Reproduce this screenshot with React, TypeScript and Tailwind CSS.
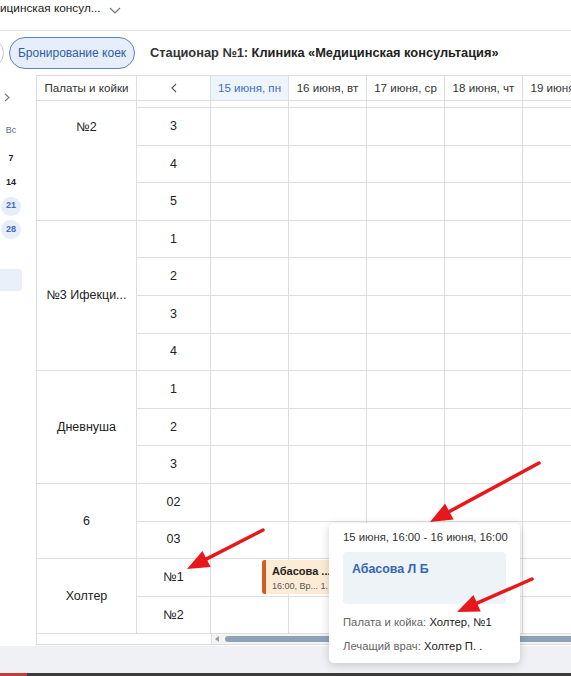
import React from "react";

type Group = { label: string; beds: string[]; partial?: boolean; top?: boolean };

const groups: Group[] = [
  { label: "№2", beds: ["3", "4", "5"], partial: true, top: true },
  { label: "№3 Ифекци...", beds: ["1", "2", "3", "4"] },
  { label: "Дневнуша", beds: ["1", "2", "3"] },
  { label: "6", beds: ["02", "03"] },
  { label: "Холтер", beds: ["№1", "№2"] },
];

const days = ["15 июня, пн", "16 июня, вт", "17 июня, ср", "18 июня, чт", "19 июня, пт", "20 июня, сб"];

function DayCells({ h, event }: { h: string; event?: boolean }) {
  return (
    <>
      {days.map((d, i) => (
        <div
          key={d}
          className={`${h} w-[78px] shrink-0 border-r border-b border-[#dedede] ${i === 0 ? "relative" : ""}`}
        >
          {event && i === 0 && (
            <div className="absolute left-[51px] top-[1px] z-10 h-[34px] w-[80px] rounded-[3px] border-l-[4px] border-[#d35b1c] bg-[#fdecd5] pl-[6px] pt-[4px]">
              <div className="text-[11px] font-bold leading-[14px] text-[#222]">Абасова ...</div>
              <div className="mt-[3px] text-[9px] leading-[11px] text-[#555]">16:00, Вр... 1.</div>
            </div>
          )}
        </div>
      ))}
    </>
  );
}

function Arrow({ x1, y1, x2, y2 }: { x1: number; y1: number; x2: number; y2: number }) {
  const dx = x2 - x1;
  const dy = y2 - y1;
  const len = Math.hypot(dx, dy);
  const ux = dx / len;
  const uy = dy / len;
  const bx = x2 - 22 * ux;
  const by = y2 - 22 * uy;
  const nx = uy;
  const ny = -ux;
  const pts = `${x2},${y2} ${bx + 9 * nx},${by + 9 * ny} ${bx - 9 * nx},${by - 9 * ny}`;
  return (
    <g>
      <line x1={x1} y1={y1} x2={bx + 2 * ux} y2={by + 2 * uy} stroke="#e8171b" strokeWidth={3.5} strokeLinecap="round" />
      <polygon points={pts} fill="#e8171b" />
    </g>
  );
}

export default function App() {
  return (
    <div
      className="relative h-[676px] w-[571px] overflow-hidden bg-white text-[#222]"
      style={{ fontFamily: '"Liberation Sans", Arial, sans-serif' }}
    >
      {/* clinic selector */}
      <div className="flex h-[31px] items-start border-b border-[#e3e3e3]">
        <span className="pt-[1px] text-[11.8px] leading-[14px] text-[#222]">ицинская консул...</span>
        <svg width="12" height="7" viewBox="0 0 12 7" className="ml-[8px] mt-[7px]">
          <polyline points="1,1 6,6 11,1" fill="none" stroke="#777" strokeWidth="1.2" />
        </svg>
      </div>

      {/* tabs + title */}
      <div className="flex h-[44px] items-center">
        <div className="-ml-[28px] h-[32px] w-[32px] shrink-0 rounded-full border border-[#c9c9c9]" />
        <div className="ml-[5px] flex h-[32px] w-[126px] shrink-0 items-center justify-center rounded-full border border-[#5d80be] bg-[#e6eefa] text-[12px] text-[#2f5ca8]">
          Бронирование коек
        </div>
        <div className="ml-[15px] whitespace-nowrap text-[12.8px] text-[#333]">
          <span className="font-semibold">Стационар №1: </span>
          <span className="font-bold text-[#222]">Клиника «Медицинская консультация»</span>
        </div>
      </div>

      <div className="flex h-[571px]">
        {/* mini calendar, clipped */}
        <div className="flex w-[36px] shrink-0 flex-col">
          <svg width="6" height="9" viewBox="0 0 6 9" className="ml-[4px] mt-[18px]">
            <polyline points="1,1 5,4.5 1,8" fill="none" stroke="#777" strokeWidth="1.1" />
          </svg>
          <div className="mt-[21px] flex h-[16px] w-[22px] items-center justify-center text-[9px] text-[#5d6f8b]">Вс</div>
          <div className="mt-[8px] flex w-[22px] flex-col items-center">
            <div className="flex h-[23.7px] items-center text-[9px] font-bold">7</div>
            <div className="flex h-[23.7px] items-center text-[9px] font-bold">14</div>
            <div className="flex h-[23.7px] items-center">
              <div className="flex h-[19px] w-[20px] items-center justify-center rounded-full bg-[#e6eefa] text-[9px] font-bold text-[#3b6bc1]">21</div>
            </div>
            <div className="flex h-[23.7px] items-center">
              <div className="flex h-[19px] w-[20px] items-center justify-center rounded-full bg-[#e6eefa] text-[9px] font-bold text-[#3b6bc1]">28</div>
            </div>
          </div>
          <div className="mt-[27px] h-[22px] w-[22px] rounded-r-[4px] bg-[#eaf0fa]" />
        </div>

        {/* bed board */}
        <div className="flex shrink-0 flex-col border-t border-l border-[#dedede]">
          <div className="flex h-[25px] border-b border-[#dedede] text-[11.6px] text-[#333]">
            <div className="flex w-[100px] shrink-0 items-center justify-center border-r border-[#dedede]">Палаты и койки</div>
            <div className="flex w-[74px] shrink-0 items-center justify-center border-r border-[#dedede]">
              <svg width="6" height="10" viewBox="0 0 6 10">
                <polyline points="5,1 1,5 5,9" fill="none" stroke="#555" strokeWidth="1.1" />
              </svg>
            </div>
            {days.map((d, i) => (
              <div
                key={d}
                className={`flex w-[78px] shrink-0 items-center justify-center whitespace-nowrap border-r border-[#dedede] ${
                  i === 0 ? "bg-[#eef4fc] text-[#3a6cc2]" : ""
                }`}
              >
                {d}
              </div>
            ))}
          </div>

          {groups.map((g) => (
            <div key={g.label} className="flex">
              <div
                className={`flex w-[100px] shrink-0 justify-center border-r border-b border-[#dedede] text-[12.5px] ${
                  g.top ? "items-start pt-[18px]" : "items-center"
                }`}
              >
                <span className="leading-[16px]">{g.label}</span>
              </div>
              <div className="flex flex-col">
                {g.partial && (
                  <div className="flex">
                    <div className="h-[7px] w-[74px] shrink-0 border-r border-b border-[#dedede]" />
                    <DayCells h="h-[7px]" />
                  </div>
                )}
                {g.beds.map((b) => (
                  <div key={b} className="flex">
                    <div className="flex h-[37.6px] w-[74px] shrink-0 items-center justify-center border-r border-b border-[#dedede] text-[12.5px]">
                      {b}
                    </div>
                    <DayCells h="h-[37.6px]" event={g.label === "Холтер" && b === "№1"} />
                  </div>
                ))}
              </div>
            </div>
          ))}

          {/* horizontal scroller */}
          <div className="flex h-[11px] border-b border-[#dedede]">
            <div className="w-[174px] shrink-0" />
            <div className="flex flex-1 items-center border-l border-[#dedede] bg-[#f4f4f4]">
              <svg width="5" height="6" viewBox="0 0 5 6" className="ml-[3px]">
                <polygon points="4,0 0,3 4,6" fill="#9a9a9a" />
              </svg>
              <div className="ml-[5px] h-[6px] flex-1 rounded-full bg-[#8ea2b7]" />
            </div>
          </div>
        </div>
      </div>

      <div className="h-[27px] bg-[#eff1f4]" />
      <div className="flex h-[4px] bg-[#3c3c3c]">
        <div className="w-[27px] bg-[#c43c3c]" />
      </div>

      {/* booking tooltip */}
      <div className="absolute left-[329px] top-[523px] z-20 h-[140px] w-[191px] rounded-[5px] bg-white px-[14px] pt-[6px] shadow-[0_2px_10px_rgba(0,0,0,0.18)]">
        <div className="whitespace-nowrap text-[11.3px] leading-[16px] text-[#333]">15 июня, 16:00 - 16 июня, 16:00</div>
        <div className="mt-[7px] h-[52px] rounded-[4px] bg-[#eef3f8] pl-[9px] pt-[9px]">
          <div className="text-[12.4px] font-bold leading-[16px] text-[#3565b5]">Абасова Л Б</div>
        </div>
        <div className="mt-[10px] whitespace-nowrap text-[11.3px] leading-[16px]">
          <span className="text-[#666]">Палата и койка: </span>
          <span className="text-[#222]">Холтер, №1</span>
        </div>
        <div className="mt-[8px] whitespace-nowrap text-[11.3px] leading-[16px]">
          <span className="text-[#666]">Лечащий врач: </span>
          <span className="text-[#222]">Холтер П. .</span>
        </div>
      </div>

      {/* annotation arrows */}
      <svg className="pointer-events-none absolute left-0 top-0 z-30" width="571" height="676">
        <Arrow x1={263} y1={530} x2={187} y2={569} />
        <Arrow x1={539} y1={463} x2={430} y2={522} />
        <Arrow x1={532} y1={579} x2={457} y2={612} />
      </svg>
    </div>
  );
}
